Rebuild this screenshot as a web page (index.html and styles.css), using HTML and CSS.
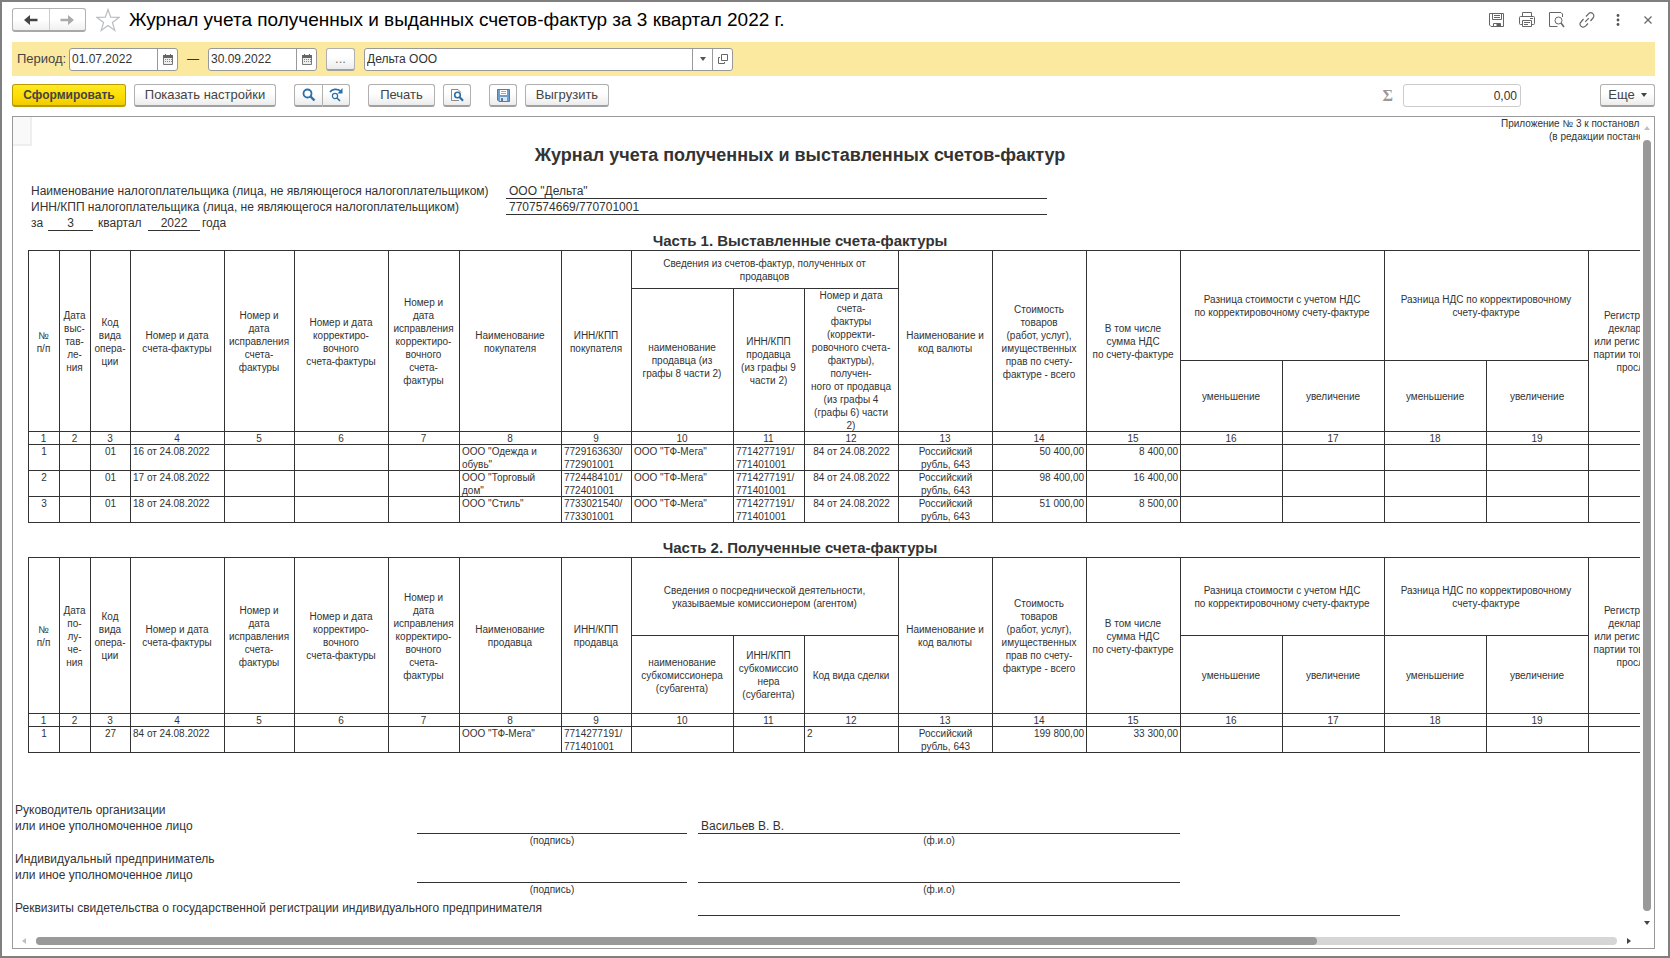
FILE: index.html
```html
<!DOCTYPE html>
<html lang="ru">
<head>
<meta charset="utf-8">
<title>Журнал учета счетов-фактур</title>
<link rel="stylesheet" href="styles.css">
</head>
<body>
<main class="window">
  <header class="titlebar">
    <div class="nav">
      <button class="nav-btn" aria-label="Назад"><svg width="16" height="12" viewBox="0 0 16 12"><path d="M1 6 7 1v3.700h7.500v2.600H7V11z" fill="#444"/></svg></button>
      <button class="nav-btn" aria-label="Вперед"><svg width="16" height="12" viewBox="0 0 16 12"><path d="M15 6 9 1v3.700H1.500v2.600H9V11z" fill="#aaa"/></svg></button>
    </div>
    <button class="star" aria-label="Избранное"><svg width="24" height="24" viewBox="0 0 24 24"><path d="m12 1.500 2.700 7.700 8.300.2-6.600 5 2.400 8L12 17.600 5.200 22.400l2.400-8-6.600-5 8.300-.2z" fill="#fff" stroke="#b9bcc2" stroke-width="1.200"/></svg></button>
    <h1 class="title">Журнал учета полученных и выданных счетов-фактур за 3 квартал 2022 г.</h1>
    <div class="tools">
      <button class="tool" aria-label="Сохранить"><svg width="16" height="16" viewBox="0 0 16 16" fill="none" stroke="#666"><path d="M.5 1.500h14v13H2l-1.500-1.500zM3.500 1.500v6h9v-6M5 3.500h6M5 5.500h6M4.500 14.500v-3h7v3"/><path d="M8 12h3v2H8z" fill="#555"/></svg></button>
      <button class="tool" aria-label="Печать"><svg width="16" height="16" viewBox="0 0 16 16" fill="none" stroke="#666"><path d="M3.500 4.500v-4h9v4M3.500 12.500h-2a1 1 0 0 1-1-1v-6a1 1 0 0 1 1-1h13a1 1 0 0 1 1 1v6a1 1 0 0 1-1 1h-2M3.500 8.500h9v6h-9zM5 10.500h6M5 12.500h4M11 6.500h3"/></svg></button>
      <button class="tool" aria-label="Просмотр"><svg width="16" height="16" viewBox="0 0 16 16" fill="none" stroke="#666"><path d="M13.500 5V2L12 .5H.5v14h8"/><circle cx="9.500" cy="8.500" r="3.500"/><path d="m12 11 3 4" stroke-width="1.500"/></svg></button>
      <button class="tool" aria-label="Ссылка"><svg width="16" height="16" viewBox="0 0 16 16" fill="none" stroke="#666" stroke-width="1.200"><path d="m7 4.500 2.500-2.700a3 3 0 0 1 4.500 4.200L11.500 9M9 11.500l-2.500 2.700A3 3 0 0 1 2 10l2.500-3M6.200 9.800l3.600-3.600"/></svg></button>
      <button class="tool" aria-label="Меню"><svg width="16" height="16" viewBox="0 0 16 16" fill="#555"><circle cx="9" cy="3.500" r="1.400"/><circle cx="9" cy="8" r="1.400"/><circle cx="9" cy="12.500" r="1.400"/></svg></button>
      <button class="tool" aria-label="Закрыть"><svg width="16" height="16" viewBox="0 0 16 16" stroke="#666" stroke-width="1.200"><path d="m5.500 4.500 7 7m0-7-7 7"/></svg></button>
    </div>
  </header>

  <section class="filter">
    <label for="from" class="filter-label">Период:</label>
    <div class="field date"><input id="from" type="text" value="01.07.2022"><button aria-label="Календарь"><svg width="10" height="11" viewBox="0 0 10 11"><path d="M.5 2.500h9v8h-9z" fill="#eee" stroke="#777"/><path d="M0 1h10v3H0zM2 0h1v3H2zM7 0h1v3H7z" fill="#666"/><path d="M2 5.500h7M2 7.500h7" stroke="#888" stroke-dasharray="1 1"/></svg></button></div>
    <span class="dash">—</span>
    <div class="field date"><input aria-label="Конец периода" type="text" value="30.09.2022"><button aria-label="Календарь"><svg width="10" height="11" viewBox="0 0 10 11"><path d="M.5 2.500h9v8h-9z" fill="#eee" stroke="#777"/><path d="M0 1h10v3H0zM2 0h1v3H2zM7 0h1v3H7z" fill="#666"/><path d="M2 5.500h7M2 7.500h7" stroke="#888" stroke-dasharray="1 1"/></svg></button></div>
    <button class="btn dots">...</button>
    <div class="field org"><input aria-label="Организация" type="text" value="Дельта ООО"><button aria-label="Выбрать"><svg width="6" height="4" viewBox="0 0 6 4"><path d="M0 0h6L3 4z" fill="#555"/></svg></button><button aria-label="Открыть"><svg width="10" height="10" viewBox="0 0 10 10" fill="none" stroke="#666"><path d="M3.500.5h6v6h-6zM2 3.500H.5v6h6V8"/></svg></button></div>
  </section>

  <section class="toolbar">
    <button class="btn primary">Сформировать</button>
    <button class="btn settings">Показать настройки</button>
    <div class="pair">
      <button class="btn icon" aria-label="Найти"><svg width="14" height="14" viewBox="0 0 14 14" fill="none" stroke="#2a6fa8"><circle cx="5.500" cy="5.500" r="4" stroke-width="1.800"/><path d="m8.500 8.500 4 4" stroke-width="2.400"/></svg></button>
      <button class="btn icon" aria-label="Найти следующий"><svg width="15" height="14" viewBox="0 0 15 14" fill="none" stroke="#2a6fa8"><path d="M1 4C3 1 8 .5 11.500 3" stroke-width="1.800"/><path d="M13.500 0v5.500H8.500z" fill="#2a6fa8" stroke="none"/><circle cx="6" cy="8" r="2.600" stroke-width="1.200"/><path d="m8 10 3 3" stroke-width="1.600"/></svg></button>
    </div>
    <button class="btn print">Печать</button>
    <button class="btn icon" aria-label="Просмотр"><svg width="14" height="14" viewBox="0 0 14 14" fill="none"><path d="M9 12.500H1.500v-11H8l3 3" stroke="#888"/><circle cx="7.500" cy="7" r="2.800" stroke="#2a6fa8" stroke-width="1.600"/><path d="m9.500 9 3.500 3.800" stroke="#2a6fa8" stroke-width="2.200"/></svg></button>
    <button class="btn icon save" aria-label="Сохранить"><svg width="13" height="13" viewBox="0 0 13 13"><path d="M.5.5h12v12H2L.5 11z" fill="#6f9dcc" stroke="#557ba8"/><path d="M3 1h7v5H3z" fill="#fff"/><path d="M4 2.500h5M4 4.500h5" stroke="#9ab"/><path d="M3 8h7v4H3z" fill="#dde6ef"/><path d="M4 9h2v3H4z" fill="#557ba8"/></svg></button>
    <button class="btn export">Выгрузить</button>
    <label class="sigma" for="sum">Σ</label>
    <input id="sum" class="sum" type="text" value="0,00" readonly>
    <button class="btn more">Еще <svg width="6" height="4" viewBox="0 0 6 4"><path d="M0 0h6L3 4z" fill="#444"/></svg></button>
  </section>

  <section class="frame">
    <div class="viewport">
      <div class="corner"></div>
      <div class="sheet">
        <div class="appendix"><div>Приложение № 3 к постановлению</div><div class="second">(в редакции постановления)</div></div>
        <h2 class="doc-title">Журнал учета полученных и выставленных счетов-фактур</h2>
        <div class="requisites">
          <span>Наименование налогоплательщика (лица, не являющегося налогоплательщиком)</span><span class="line">ООО "Дельта"</span>
          <span>ИНН/КПП налогоплательщика (лица, не являющегося налогоплательщиком)</span><span class="line">7707574669/770701001</span>
        </div>
        <div class="period"><span class="za">за</span><span class="line quarter">3</span><span class="word">квартал</span><span class="line year">2022</span><span>года</span></div>
        <h3 class="part">Часть 1. Выставленные счета-фактуры</h3>
        <table class="grid">
          <colgroup><col class="w31"><col class="w31"><col class="w40"><col class="w94"><col class="w70"><col class="w94"><col class="w71"><col class="w102"><col class="w70"><col class="w102"><col class="w71"><col class="w94"><col class="w94"><col class="w94"><col class="w94"><col class="w102"><col class="w102"><col class="w102"><col class="w102"><col class="w146"></colgroup>
          <thead>
            <tr class="h38"><th rowspan="3">№<br>п/п</th><th rowspan="3">Дата<br>выс-<br>тав-<br>ле-<br>ния</th><th rowspan="3">Код<br>вида<br>опера-<br>ции</th><th rowspan="3">Номер и дата<br>счета-фактуры</th><th rowspan="3">Номер и<br>дата<br>исправления<br>счета-<br>фактуры</th><th rowspan="3">Номер и дата<br>корректиро-<br>вочного<br>счета-фактуры</th><th rowspan="3">Номер и<br>дата<br>исправления<br>корректиро-<br>вочного<br>счета-<br>фактуры</th><th rowspan="3">Наименование<br>покупателя</th><th rowspan="3">ИНН/КПП<br>покупателя</th><th colspan="3">Сведения из счетов-фактур, полученных от<br>продавцов</th><th rowspan="3">Наименование и<br>код валюты</th><th rowspan="3">Стоимость<br>товаров<br>(работ, услуг),<br>имущественных<br>прав по счету-<br>фактуре - всего</th><th rowspan="3">В том числе<br>сумма НДС<br>по счету-фактуре</th><th colspan="2" rowspan="2">Разница стоимости с учетом НДС<br>по корректировочному счету-фактуре</th><th colspan="2" rowspan="2">Разница НДС по корректировочному<br>счету-фактуре</th><th rowspan="3">Регистрационный номер<br>декларации на товары<br>или регистрационный номер<br>партии товара, подлежащего<br>прослеживаемости</th></tr>
            <tr class="h72"><th rowspan="2">наименование<br>продавца (из<br>графы 8 части 2)</th><th rowspan="2">ИНН/КПП<br>продавца<br>(из графы 9<br>части 2)</th><th rowspan="2">Номер и дата<br>счета-<br>фактуры<br>(корректи-<br>ровочного счета-<br>фактуры),<br>получен-<br>ного от продавца<br>(из графы 4<br>(графы 6) части<br>2)</th></tr>
            <tr class="h71"><th>уменьшение</th><th>увеличение</th><th>уменьшение</th><th>увеличение</th></tr>
            <tr class="nums"><th>1</th><th>2</th><th>3</th><th>4</th><th>5</th><th>6</th><th>7</th><th>8</th><th>9</th><th>10</th><th>11</th><th>12</th><th>13</th><th>14</th><th>15</th><th>16</th><th>17</th><th>18</th><th>19</th><th></th></tr>
          </thead>
          <tbody>
            <tr><td class="c">1</td><td></td><td class="c">01</td><td>16 от 24.08.2022</td><td></td><td></td><td></td><td>ООО "Одежда и<br>обувь"</td><td>7729163630/<br>772901001</td><td>ООО "ТФ-Мега"</td><td>7714277191/<br>771401001</td><td class="c">84 от 24.08.2022</td><td class="c">Российский<br>рубль, 643</td><td class="r">50 400,00</td><td class="r">8 400,00</td><td></td><td></td><td></td><td></td><td></td></tr>
            <tr><td class="c">2</td><td></td><td class="c">01</td><td>17 от 24.08.2022</td><td></td><td></td><td></td><td>ООО "Торговый<br>дом"</td><td>7724484101/<br>772401001</td><td>ООО "ТФ-Мега"</td><td>7714277191/<br>771401001</td><td class="c">84 от 24.08.2022</td><td class="c">Российский<br>рубль, 643</td><td class="r">98 400,00</td><td class="r">16 400,00</td><td></td><td></td><td></td><td></td><td></td></tr>
            <tr><td class="c">3</td><td></td><td class="c">01</td><td>18 от 24.08.2022</td><td></td><td></td><td></td><td>ООО "Стиль"</td><td>7733021540/<br>773301001</td><td>ООО "ТФ-Мега"</td><td>7714277191/<br>771401001</td><td class="c">84 от 24.08.2022</td><td class="c">Российский<br>рубль, 643</td><td class="r">51 000,00</td><td class="r">8 500,00</td><td></td><td></td><td></td><td></td><td></td></tr>
          </tbody>
        </table>
        <h3 class="part two">Часть 2. Полученные счета-фактуры</h3>
        <table class="grid">
          <colgroup><col class="w31"><col class="w31"><col class="w40"><col class="w94"><col class="w70"><col class="w94"><col class="w71"><col class="w102"><col class="w70"><col class="w102"><col class="w71"><col class="w94"><col class="w94"><col class="w94"><col class="w94"><col class="w102"><col class="w102"><col class="w102"><col class="w102"><col class="w146"></colgroup>
          <thead>
            <tr class="h78"><th rowspan="2">№<br>п/п</th><th rowspan="2">Дата<br>по-<br>лу-<br>че-<br>ния</th><th rowspan="2">Код<br>вида<br>опера-<br>ции</th><th rowspan="2">Номер и дата<br>счета-фактуры</th><th rowspan="2">Номер и<br>дата<br>исправления<br>счета-<br>фактуры</th><th rowspan="2">Номер и дата<br>корректиро-<br>вочного<br>счета-фактуры</th><th rowspan="2">Номер и<br>дата<br>исправления<br>корректиро-<br>вочного<br>счета-<br>фактуры</th><th rowspan="2">Наименование<br>продавца</th><th rowspan="2">ИНН/КПП<br>продавца</th><th colspan="3">Сведения о посреднической деятельности,<br>указываемые комиссионером (агентом)</th><th rowspan="2">Наименование и<br>код валюты</th><th rowspan="2">Стоимость<br>товаров<br>(работ, услуг),<br>имущественных<br>прав по счету-<br>фактуре - всего</th><th rowspan="2">В том числе<br>сумма НДС<br>по счету-фактуре</th><th colspan="2">Разница стоимости с учетом НДС<br>по корректировочному счету-фактуре</th><th colspan="2">Разница НДС по корректировочному<br>счету-фактуре</th><th rowspan="2">Регистрационный номер<br>декларации на товары<br>или регистрационный номер<br>партии товара, подлежащего<br>прослеживаемости</th></tr>
            <tr class="h78"><th>наименование<br>субкомиссионера<br>(субагента)</th><th>ИНН/КПП<br>субкомиссио<br>нера<br>(субагента)</th><th>Код вида сделки</th><th>уменьшение</th><th>увеличение</th><th>уменьшение</th><th>увеличение</th></tr>
            <tr class="nums"><th>1</th><th>2</th><th>3</th><th>4</th><th>5</th><th>6</th><th>7</th><th>8</th><th>9</th><th>10</th><th>11</th><th>12</th><th>13</th><th>14</th><th>15</th><th>16</th><th>17</th><th>18</th><th>19</th><th></th></tr>
          </thead>
          <tbody>
            <tr><td class="c">1</td><td></td><td class="c">27</td><td>84 от 24.08.2022</td><td></td><td></td><td></td><td>ООО "ТФ-Мега"</td><td>7714277191/<br>771401001</td><td></td><td></td><td>2</td><td class="c">Российский<br>рубль, 643</td><td class="r">199 800,00</td><td class="r">33 300,00</td><td></td><td></td><td></td><td></td><td></td></tr>
          </tbody>
        </table>
        <div class="signs">
          <span class="who">Руководитель организации<br>или иное уполномоченное лицо</span><span class="line sign"></span><span class="line name">Васильев В. В.</span>
          <span class="cap sign">(подпись)</span><span class="cap name">(ф.и.о)</span>
          <span class="who">Индивидуальный предприниматель<br>или иное уполномоченное лицо</span><span class="line sign"></span><span class="line name"></span>
          <span class="cap sign">(подпись)</span><span class="cap name">(ф.и.о)</span>
          <span class="who wide">Реквизиты свидетельства о государственной регистрации индивидуального предпринимателя</span><span class="line reg"></span>
        </div>
      </div>
    </div>
    <div class="vbar">
      <svg width="6" height="4" viewBox="0 0 6 4"><path d="M0 4h6L3 0z" fill="#c0c0c0"/></svg>
      <div class="thumb"></div>
      <svg width="6" height="4" viewBox="0 0 6 4"><path d="M0 0h6L3 4z" fill="#444"/></svg>
    </div>
    <div class="hbar">
      <svg width="4" height="6" viewBox="0 0 4 6"><path d="M4 0v6L0 3z" fill="#c0c0c0"/></svg>
      <div class="track"><div class="thumb"></div></div>
      <svg width="4" height="6" viewBox="0 0 4 6"><path d="M0 0v6l4-3z" fill="#444"/></svg>
    </div>
  </section>
</main>
</body>
</html>
```
FILE: styles.css
```css
* { box-sizing: border-box; }
body { margin: 0; font: 12px/16px "Liberation Sans", Arial, sans-serif; color: #333; }
button, input { font: inherit; color: inherit; margin: 0; }
svg { display: block; flex: none; }
h1, h2, h3 { margin: 0; }

.window { height: 100vh; display: flex; flex-direction: column; border: 2px solid #7f7f7f; background: #fff; padding: 6px 13px 7px 10px; overflow: hidden; }

.titlebar { display: flex; align-items: center; height: 24px; }
.nav { display: flex; width: 74px; height: 24px; border: 1px solid #b2b2b2; border-bottom: 2px solid #a8a8a8; border-radius: 3px; background: linear-gradient(#fff 50%, #f0f0f0); }
.nav-btn { flex: 1; display: flex; align-items: center; justify-content: center; border: 0; background: none; padding: 0; }
.nav-btn + .nav-btn { border-left: 1px solid #ccc; }
.star { border: 0; background: none; padding: 0; margin-left: 10px; }
.title { font-size: 19px; line-height: 24px; font-weight: 400; color: #000; margin-left: 9px; white-space: nowrap; }
.tools { display: flex; gap: 14px; margin-left: auto; }
.tool { border: 0; background: none; padding: 0; }

.filter { display: flex; align-items: center; height: 34px; margin-top: 10px; padding-left: 5px; background: #fbe9a0; }
.filter-label { width: 52px; color: #444; font-size: 13px; }
.field { display: flex; height: 23px; border: 1px solid #999; border-radius: 3px; background: #fff; }
.field input { flex: 1; min-width: 0; border: 0; background: none; padding: 0 2px; outline: 0; }
.field button { display: flex; align-items: center; justify-content: center; width: 20px; padding: 0; border: 0; border-left: 1px solid #999; background: none; }
.date { width: 109px; }
.dash { width: 30px; text-align: center; }
.org { width: 369px; margin-left: 9px; }

.btn { display: flex; align-items: center; justify-content: center; height: 23px; padding: 0; border: 1px solid #b0b0b0; border-bottom: 2px solid #a0a0a0; border-radius: 3px; background: linear-gradient(#fff 40%, #ececec); color: #444; font-size: 13px; white-space: nowrap; }
.dots { width: 29px; margin-left: 9px; color: #777; }
.toolbar { display: flex; align-items: center; margin-top: 8px; }
.primary { width: 114px; font-weight: 700; font-size: 12px; background: linear-gradient(#ffe924, #fddc00 60%, #f0cb00); border-color: #b89b00; }
.settings { width: 142px; margin-left: 8px; }
.pair { display: flex; margin: 0 18px; }
.icon { width: 28px; }
.pair .icon:first-child { border-radius: 3px 0 0 3px; border-right: 0; }
.pair .icon:last-child { border-radius: 0 3px 3px 0; }
.print { width: 67px; margin-right: 8px; }
.save { margin: 0 8px 0 18px; }
.export { width: 84px; }
.sigma { margin-left: auto; margin-right: 10px; font: bold 16px/20px "Liberation Serif", serif; color: #999; }
.sum { width: 118px; height: 23px; border: 1px solid #ccc; border-radius: 3px; text-align: right; padding: 0 3px; outline: 0; font-size: 12px; }
.more { width: 55px; margin-left: 79px; gap: 6px; }

.frame { flex: 1; min-height: 0; margin-top: 9px; border: 1px solid #999; display: grid; grid-template: minmax(0, 1fr) 16px / minmax(0, 1fr) 14px; }
.viewport { overflow: hidden; position: relative; }
.corner { position: absolute; left: 0; top: 0; width: 19px; height: 29px; background: #f9f9f9; border: solid #eee; border-width: 0 2px 2px 0; }
.sheet { width: 1722px; }

.appendix { font-size: 10px; line-height: 13px; padding-left: 1488px; white-space: nowrap; }
.appendix .second { padding-left: 48px; }
.doc-title { width: 1544px; margin: 0 0 0 15px; padding-top: 1px; text-align: center; font-size: 18px; line-height: 22px; }
.requisites { display: grid; grid-template-columns: 475px 541px; margin: 17px 0 0 18px; white-space: nowrap; }
.line { height: 16px; border-bottom: 1px solid #333; padding-left: 3px; }
.period { display: flex; margin-left: 18px; height: 16px; }
.za { width: 17px; }
.quarter { width: 45px; padding: 0; text-align: center; }
.word { width: 55px; padding-left: 5px; }
.year { width: 52px; padding: 0; margin-right: 2px; text-align: center; }
.part { width: 1544px; margin: 0 0 0 15px; padding-top: 1px; text-align: center; font-size: 15px; line-height: 18px; }

.grid { table-layout: fixed; width: 1707px; margin-left: 15px; border-collapse: separate; border-spacing: 0; border: solid #333; border-width: 1px 0 0 1px; font-size: 10px; line-height: 13px; }
.grid th, .grid td { padding: 0 2px 0 0; font-weight: 400; box-shadow: inset -1px -1px 0 #333; white-space: nowrap; }
.grid td { height: 26px; padding: 0 3px 0 2px; vertical-align: top; }
.grid .c { text-align: center; }
.grid .r { text-align: right; }
.w31 { width: 31px; }
.w40 { width: 40px; }
.w70 { width: 70px; }
.w71 { width: 71px; }
.w94 { width: 94px; }
.w102 { width: 102px; }
.w146 { width: 146px; }
.h38 { height: 38px; }
.h72 { height: 72px; }
.h71 { height: 71px; }
.h78 { height: 78px; }
.nums { height: 13px; }
.part.two { margin-top: 15px; }

.signs { display: grid; grid-template-columns: 402px 270px 11px 482px 220px; grid-template-rows: 32px 17px 32px 17px 16px; margin: 49px 0 0 2px; white-space: nowrap; align-items: end; }
.who { grid-column: 1; }
.who.wide { grid-column: 1 / 3; }
.sign { grid-column: 2; }
.name { grid-column: 4; }
.reg { grid-column: 4 / 6; }
.cap { align-self: start; font-size: 10px; line-height: 14px; text-align: center; }

.vbar { grid-column: 2; display: flex; flex-direction: column; align-items: center; gap: 10px; padding: 9px 0 7px; }
.vbar .thumb { flex: 1; width: 8px; border-radius: 4px; background: #999; }
.hbar { grid-row: 2; grid-column: 1; display: flex; align-items: center; gap: 10px; padding: 2px 9px 0; }
.track { flex: 1; height: 8px; border-radius: 4px; background: #d6d6d6; }
.track .thumb { width: 81%; height: 8px; border-radius: 4px; background: #999; }
```
